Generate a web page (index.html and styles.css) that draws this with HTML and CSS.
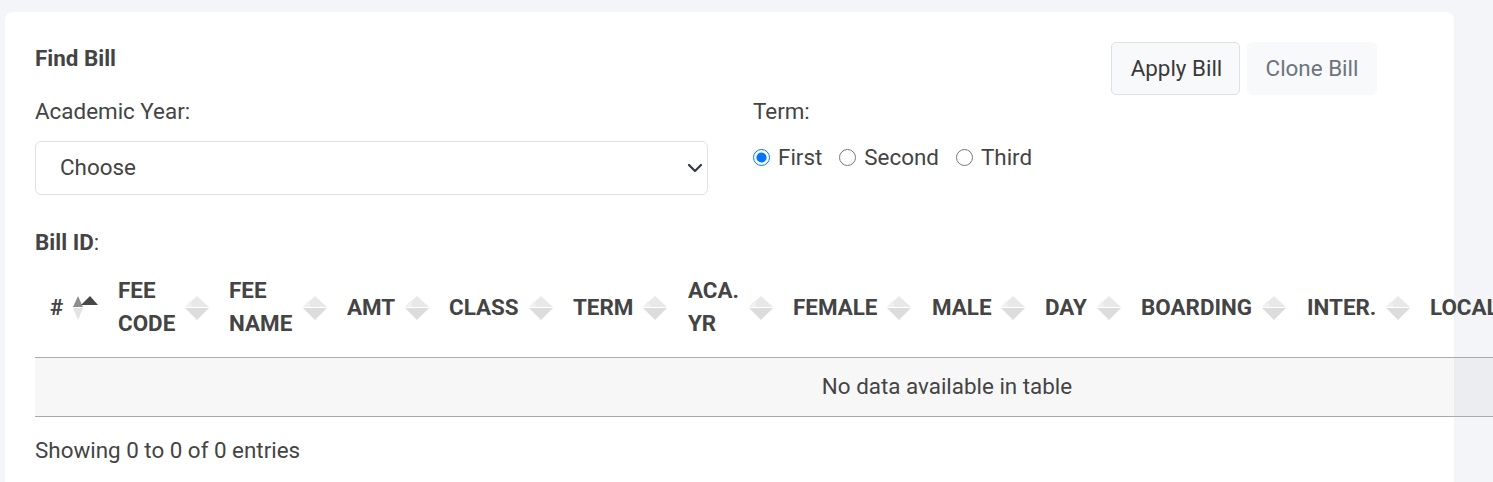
FILE: index.html
```html
<!DOCTYPE html>
<html lang="en">
<head>
<meta charset="utf-8">
<title>Find Bill</title>
<link rel="stylesheet" href="styles.css">
</head>
<body>
<div class="card">
  <div class="top">
    <div class="col col-left">
      <div class="title">Find Bill</div>
      <label class="label label-year" for="year">Academic Year:</label>
      <div class="select-wrap">
        <select id="year" class="select">
          <option>Choose</option>
        </select>
        <svg class="chev" width="16" height="10" viewBox="0 0 16 10"><path d="M2 2l6 6 6-6" fill="none" stroke="#343a40" stroke-width="2.2" stroke-linecap="round" stroke-linejoin="round"/></svg>
      </div>
    </div>
    <div class="col col-right">
      <div class="btns">
        <button class="btn btn-apply">Apply Bill</button>
        <button class="btn btn-clone">Clone Bill</button>
      </div>
      <div class="label label-term">Term:</div>
      <div class="radios">
        <label class="radio"><input type="radio" name="term" checked>First</label>
        <label class="radio"><input type="radio" name="term">Second</label>
        <label class="radio"><input type="radio" name="term">Third</label>
      </div>
    </div>
  </div>

  <div class="billid"><b>Bill ID</b>:</div>

  <table class="tbl">
    <colgroup>
      <col style="width:73px"><col style="width:111px"><col style="width:118px"><col style="width:102px">
      <col style="width:124px"><col style="width:115px"><col style="width:105px"><col style="width:139px">
      <col style="width:113px"><col style="width:96px"><col style="width:166px"><col style="width:123px"><col>
    </colgroup>
    <thead>
      <tr>
        <th class="first"><div class="th-in"><span class="tx">#</span><svg class="sort" width="26" height="26" viewBox="0 0 26 26"><polygon points="1,13 6,2 11,13" fill="#8e8e8e"/><polygon points="9,11 18,2 26,11" fill="#474747"/><polygon points="1,14 6,26 11,14" fill="#e3e3e3"/></svg></div></th>
        <th><div class="th-in"><span class="tx">FEE CODE</span><svg class="sort" width="26" height="26" viewBox="0 0 26 26"><polygon points="1,13 13,2 25,13" fill="#e8e8e8"/><polygon points="1,14 13,26 25,14" fill="#dcdcdc"/><polygon points="1,13 6,7 9,13" fill="#f0f0f0"/></svg></div></th>
        <th><div class="th-in"><span class="tx">FEE NAME</span><svg class="sort" width="26" height="26" viewBox="0 0 26 26"><polygon points="1,13 13,2 25,13" fill="#e8e8e8"/><polygon points="1,14 13,26 25,14" fill="#dcdcdc"/><polygon points="1,13 6,7 9,13" fill="#f0f0f0"/></svg></div></th>
        <th><div class="th-in"><span class="tx">AMT</span><svg class="sort" width="26" height="26" viewBox="0 0 26 26"><polygon points="1,13 13,2 25,13" fill="#e8e8e8"/><polygon points="1,14 13,26 25,14" fill="#dcdcdc"/><polygon points="1,13 6,7 9,13" fill="#f0f0f0"/></svg></div></th>
        <th><div class="th-in"><span class="tx">CLASS</span><svg class="sort" width="26" height="26" viewBox="0 0 26 26"><polygon points="1,13 13,2 25,13" fill="#e8e8e8"/><polygon points="1,14 13,26 25,14" fill="#dcdcdc"/><polygon points="1,13 6,7 9,13" fill="#f0f0f0"/></svg></div></th>
        <th><div class="th-in"><span class="tx">TERM</span><svg class="sort" width="26" height="26" viewBox="0 0 26 26"><polygon points="1,13 13,2 25,13" fill="#e8e8e8"/><polygon points="1,14 13,26 25,14" fill="#dcdcdc"/><polygon points="1,13 6,7 9,13" fill="#f0f0f0"/></svg></div></th>
        <th><div class="th-in"><span class="tx">ACA. YR</span><svg class="sort" width="26" height="26" viewBox="0 0 26 26"><polygon points="1,13 13,2 25,13" fill="#e8e8e8"/><polygon points="1,14 13,26 25,14" fill="#dcdcdc"/><polygon points="1,13 6,7 9,13" fill="#f0f0f0"/></svg></div></th>
        <th><div class="th-in"><span class="tx">FEMALE</span><svg class="sort" width="26" height="26" viewBox="0 0 26 26"><polygon points="1,13 13,2 25,13" fill="#e8e8e8"/><polygon points="1,14 13,26 25,14" fill="#dcdcdc"/><polygon points="1,13 6,7 9,13" fill="#f0f0f0"/></svg></div></th>
        <th><div class="th-in"><span class="tx">MALE</span><svg class="sort" width="26" height="26" viewBox="0 0 26 26"><polygon points="1,13 13,2 25,13" fill="#e8e8e8"/><polygon points="1,14 13,26 25,14" fill="#dcdcdc"/><polygon points="1,13 6,7 9,13" fill="#f0f0f0"/></svg></div></th>
        <th><div class="th-in"><span class="tx">DAY</span><svg class="sort" width="26" height="26" viewBox="0 0 26 26"><polygon points="1,13 13,2 25,13" fill="#e8e8e8"/><polygon points="1,14 13,26 25,14" fill="#dcdcdc"/><polygon points="1,13 6,7 9,13" fill="#f0f0f0"/></svg></div></th>
        <th><div class="th-in"><span class="tx">BOARDING</span><svg class="sort" width="26" height="26" viewBox="0 0 26 26"><polygon points="1,13 13,2 25,13" fill="#e8e8e8"/><polygon points="1,14 13,26 25,14" fill="#dcdcdc"/><polygon points="1,13 6,7 9,13" fill="#f0f0f0"/></svg></div></th>
        <th><div class="th-in"><span class="tx">INTER.</span><svg class="sort" width="26" height="26" viewBox="0 0 26 26"><polygon points="1,13 13,2 25,13" fill="#e8e8e8"/><polygon points="1,14 13,26 25,14" fill="#dcdcdc"/><polygon points="1,13 6,7 9,13" fill="#f0f0f0"/></svg></div></th>
        <th><div class="th-in"><span class="tx">LOCAL</span><svg class="sort" width="26" height="26" viewBox="0 0 26 26"><polygon points="1,13 13,2 25,13" fill="#e8e8e8"/><polygon points="1,14 13,26 25,14" fill="#dcdcdc"/><polygon points="1,13 6,7 9,13" fill="#f0f0f0"/></svg></div></th>
      </tr>
    </thead>
    <tbody>
      <tr class="empty"><td colspan="13">No data available in table</td></tr>
    </tbody>
  </table>

  <div class="info">Showing 0 to 0 of 0 entries</div>
</div>
</body>
</html>
```

FILE: styles.css
```css
html, body {
  overflow: hidden;
}
body {
  margin: 0;
  background: #f4f5f8;
  font-family: Roboto, "Noto Sans", "Liberation Sans", sans-serif;
  font-size: 22.4px;
  line-height: 1.5;
  color: #444;
}
.card {
  margin: 12px 0 0 5px;
  width: 1449px;
  min-height: 520px;
  box-sizing: border-box;
  background: #fff;
  border-radius: 8px;
  padding: 30px 30px 20px 30px;
}
.top {
  display: flex;
  gap: 45px;
}
.col {
  display: flex;
  flex-direction: column;
}
.col-left {
  width: 673px;
}
.col-right {
  width: 624px;
}
.title {
  font-weight: 700;
}
.label {
  display: block;
}
.label-year {
  margin-top: 19px;
}
.select-wrap {
  position: relative;
  margin-top: 13px;
}
.select {
  appearance: none;
  -webkit-appearance: none;
  width: 100%;
  height: 54px;
  box-sizing: border-box;
  border: 1px solid #dee2e6;
  border-radius: 6px;
  background: #fff;
  padding: 0 40px 0 24px;
  font: inherit;
  color: #444;
  outline: none;
}
.chev {
  position: absolute;
  right: 5px;
  top: 22px;
  pointer-events: none;
}
.btns {
  display: flex;
  justify-content: flex-end;
  gap: 7px;
}
.btn {
  height: 53px;
  box-sizing: border-box;
  font: inherit;
  padding: 0 10px;
  border-radius: 5px;
  background: #f8f9fa;
  cursor: pointer;
  white-space: nowrap;
}
.btn-apply {
  width: 129px;
  border: 1px solid #dee2e6;
  color: #3a3a3a;
  padding-left: 12px;
}
.btn-clone {
  width: 130px;
  border: 1px solid #f8f9fa;
  color: #6c757d;
}
.label-term {
  margin-top: 0;
}
.radios {
  display: flex;
  align-items: center;
  margin-top: 12px;
}
.radio {
  display: flex;
  align-items: center;
  margin-right: 17px;
}
.radio input {
  width: 17px;
  height: 17px;
  margin: 0 8px 0 0;
  accent-color: #0075ff;
}
.billid {
  margin-top: 31px;
}
.tbl {
  width: 1824px;
  table-layout: fixed;
  border-collapse: collapse;
}
.tbl th {
  padding: 14px 9px 16px 10px;
  text-align: left;
  vertical-align: middle;
  font-weight: 700;
  color: #444;
  border-bottom: 1px solid #aaa;
}
.tbl th.first {
  padding-left: 15px;
}
.th-in {
  display: flex;
  align-items: center;
}
.tx {
  flex: 0 1 auto;
  min-width: 0;
}
.sort {
  flex: 0 0 26px;
  margin-left: 9px;
}
.empty td {
  background: rgba(0, 0, 0, 0.03);
  text-align: center;
  padding: 12px 10px;
  border-bottom: 1px solid #aaa;
}
.info {
  margin-top: 17px;
}
```
